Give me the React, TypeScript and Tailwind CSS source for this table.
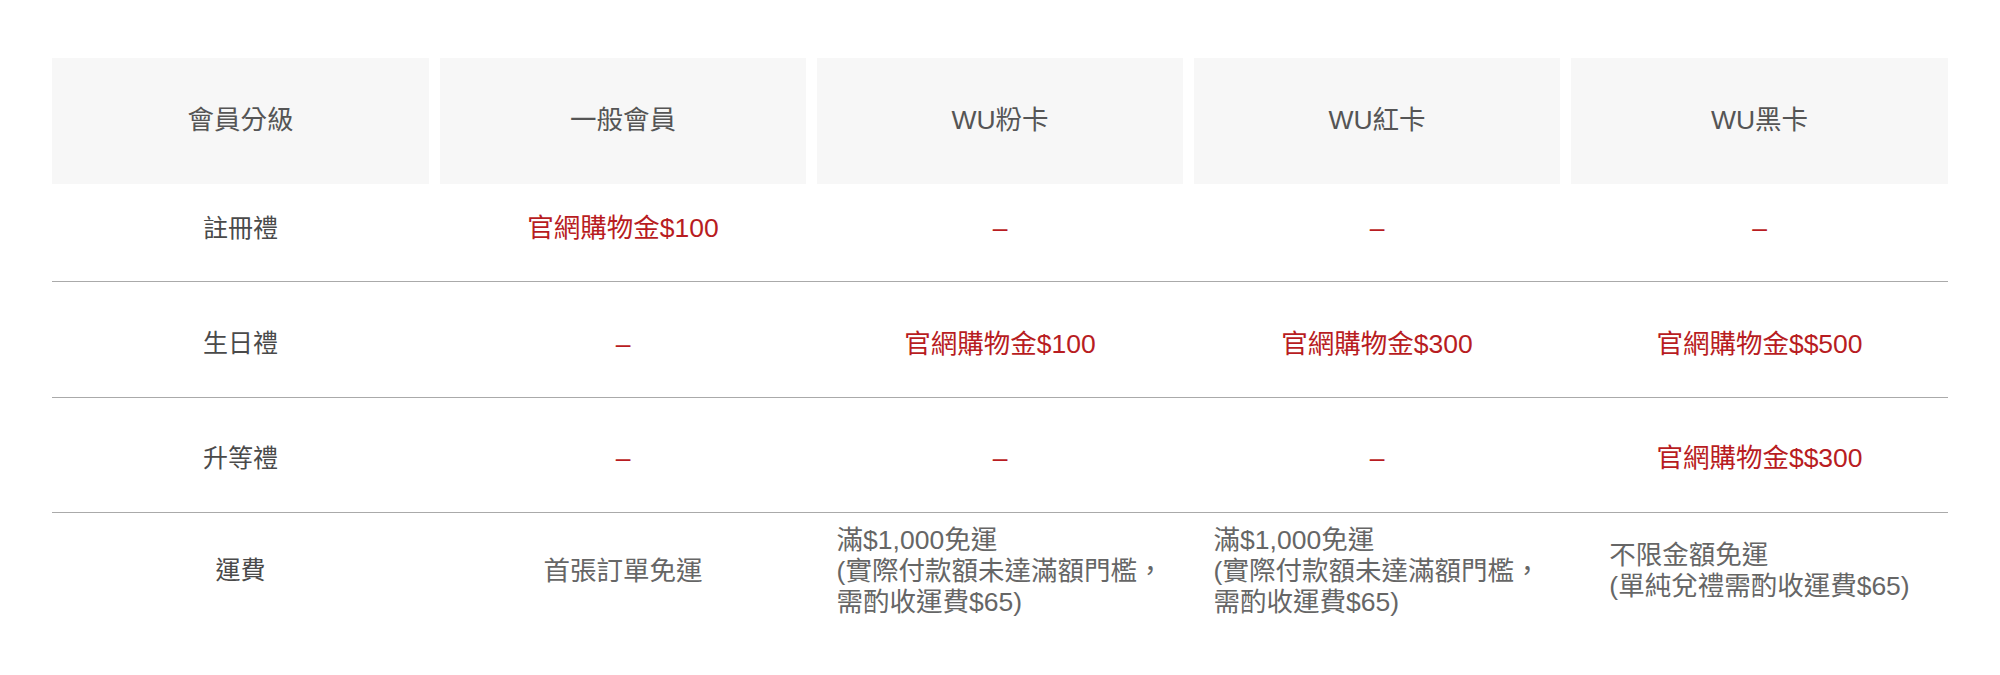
const FONT = '"Liberation Sans", "Noto Sans CJK TC", sans-serif';

type Cell = { text: string[]; red?: boolean };

const heads = ["會員分級", "一般會員", "WU粉卡", "WU紅卡", "WU黑卡"];

const rows: { label: string; h: string; cells: Cell[] }[] = [
  {
    label: "註冊禮",
    h: "h-[98px] pb-[8px] border-b",
    cells: [
      { text: ["官網購物金$100"], red: true },
      { text: ["–"], red: true },
      { text: ["–"], red: true },
      { text: ["–"], red: true },
    ],
  },
  {
    label: "生日禮",
    h: "h-[116px] pt-[9px] border-b",
    cells: [
      { text: ["–"], red: true },
      { text: ["官網購物金$100"], red: true },
      { text: ["官網購物金$300"], red: true },
      { text: ["官網購物金$$500"], red: true },
    ],
  },
  {
    label: "升等禮",
    h: "h-[115px] pt-[7px] border-b",
    cells: [
      { text: ["–"], red: true },
      { text: ["–"], red: true },
      { text: ["–"], red: true },
      { text: ["官網購物金$$300"], red: true },
    ],
  },
  {
    label: "運費",
    h: "h-[116px]",
    cells: [
      { text: ["首張訂單免運"] },
      { text: ["滿$1,000免運", "(實際付款額未達滿額門檻，", "需酌收運費$65)"] },
      { text: ["滿$1,000免運", "(實際付款額未達滿額門檻，", "需酌收運費$65)"] },
      { text: ["不限金額免運", "(單純兌禮需酌收運費$65)"] },
    ],
  },
];

const grid = "grid grid-cols-[377px_366px_366px_366px_377px] gap-x-[11px]";

export default function App() {
  return (
    <div className="min-h-[675px] bg-white px-[52px] pt-[58px]" style={{ fontFamily: FONT }}>
      <div className={grid}>
        {heads.map((h) => (
          <div
            key={h}
            className="flex h-[126px] items-center justify-center bg-[#f7f7f7] text-[26.5px] text-[#555555]"
          >
            {h}
          </div>
        ))}
      </div>
      {rows.map((r) => (
        <div key={r.label} className={`${grid} ${r.h} items-center border-[#aaaaaa]`}>
          <div className="text-center text-[25px] text-[#4a4a4a]">{r.label}</div>
          {r.cells.map((c, i) => (
            <div key={i} className="flex justify-center">
              <div
                className={`text-left text-[26.5px] leading-[31px] ${
                  c.red ? "text-[#b81c22]" : "text-[#666666]"
                }`}
              >
                {c.text.map((t, j) => (
                  <div key={j} className="whitespace-nowrap">
                    {t}
                  </div>
                ))}
              </div>
            </div>
          ))}
        </div>
      ))}
    </div>
  );
}
